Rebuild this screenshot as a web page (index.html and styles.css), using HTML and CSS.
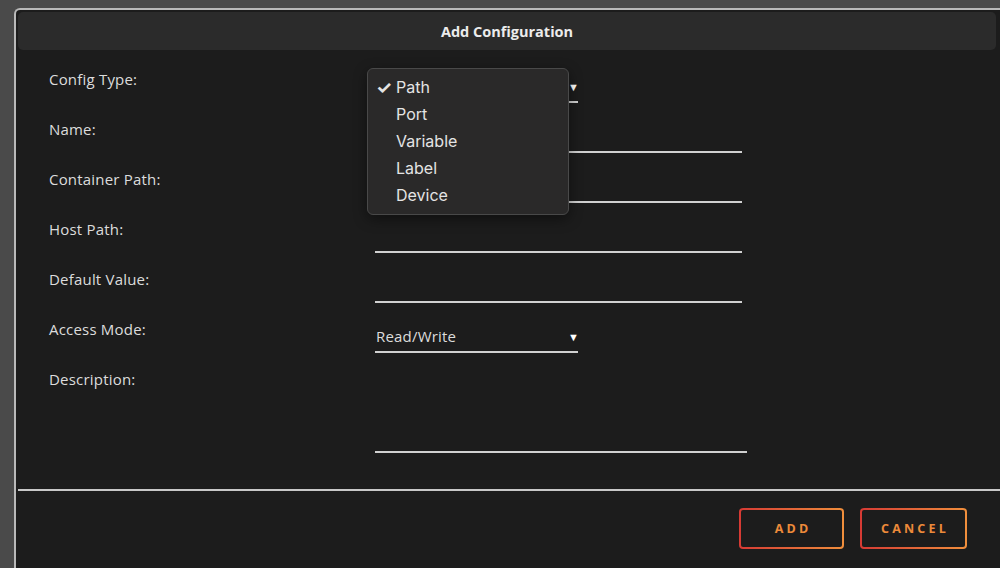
FILE: index.html
```html
<!DOCTYPE html>
<html lang="en">
<head>
    <meta charset="UTF-8">
    <meta name="viewport" content="width=device-width, initial-scale=1.0">
    <title>Add Configuration</title>
    <link rel="stylesheet" href="styles.css">
</head>
<body>
    <div class="dialog">
        <header class="dialog-header">
            <h1>Add Configuration</h1>
        </header>

        <form class="config-form">
            <div class="row">
                <label>Config Type:</label>
                <div class="field">
                    <div class="select">
                        <span></span>
                        <span class="arrow">&#9660;</span>
                    </div>
                    <ul class="menu">
                        <li class="checked">Path</li>
                        <li>Port</li>
                        <li>Variable</li>
                        <li>Label</li>
                        <li>Device</li>
                    </ul>
                </div>
            </div>
            <div class="row">
                <label for="name">Name:</label>
                <div class="field"><input type="text" id="name"></div>
            </div>
            <div class="row">
                <label for="container">Container Path:</label>
                <div class="field"><input type="text" id="container"></div>
            </div>
            <div class="row">
                <label for="host">Host Path:</label>
                <div class="field"><input type="text" id="host"></div>
            </div>
            <div class="row">
                <label for="default">Default Value:</label>
                <div class="field"><input type="text" id="default"></div>
            </div>
            <div class="row">
                <label>Access Mode:</label>
                <div class="field">
                    <div class="select">
                        <span>Read/Write</span>
                        <span class="arrow">&#9660;</span>
                    </div>
                </div>
            </div>
            <div class="row row-tall">
                <label for="desc">Description:</label>
                <div class="field"><textarea id="desc"></textarea></div>
            </div>
        </form>

        <footer class="dialog-footer">
            <button type="button" class="btn btn-add">ADD</button>
            <button type="button" class="btn btn-cancel">CANCEL</button>
        </footer>
    </div>
</body>
</html>
```

FILE: styles.css
```css
body {
    margin: 0;
    padding: 8px 0 0 14px;
    background-color: #4a4a4a;
    font-family: "Open Sans", "Noto Sans", sans-serif;
    overflow: hidden;
    height: 568px;
    box-sizing: border-box;
}

.dialog {
    width: 1000px;
    height: 580px;
    background-color: #1c1c1c;
    border-top: 2px solid #b9b9b9;
    border-left: 2px solid #b9b9b9;
    border-top-left-radius: 6px;
    padding: 2px 0 0 2px;
    box-sizing: border-box;
}

.dialog-header {
    height: 38px;
    margin-right: 18px;
    background-color: #2b2b2b;
    border-radius: 5px;
    display: flex;
    align-items: center;
    justify-content: center;
}

.dialog-header h1 {
    margin: 0;
    font-size: 14.5px;
    font-weight: 700;
    color: #ececec;
}

.config-form {
    padding: 19px 0 0 31px;
}

.row {
    display: grid;
    grid-template-columns: 326px 1fr;
    height: 50px;
}

.row-tall {
    height: 86px;
}

.row label {
    font-size: 15px;
    line-height: 20px;
    letter-spacing: 0.2px;
    color: #dcdcdc;
}

.field {
    position: relative;
}

.field input,
.field textarea {
    display: block;
    width: 367px;
    height: 34px;
    margin: 0;
    padding: 0;
    background: transparent;
    border: none;
    border-bottom: 2px solid #d0d0d0;
    box-sizing: border-box;
    color: #ddd;
    resize: none;
}

.field textarea {
    width: 372px;
    height: 84px;
}

.select {
    width: 203px;
    height: 34px;
    border-bottom: 2px solid #d0d0d0;
    box-sizing: border-box;
    display: flex;
    justify-content: space-between;
    align-items: center;
    padding: 2px 0 0 1px;
    font-size: 15px;
    letter-spacing: 0.2px;
    color: #dcdcdc;
}

.select .arrow {
    font-size: 11px;
    color: #fff;
    margin-right: -1px;
}

.menu {
    position: absolute;
    z-index: 2;
    top: -1px;
    left: -8px;
    width: 202px;
    margin: 0;
    padding: 5px 0;
    list-style: none;
    background-color: #2a2929;
    border: 1px solid #494949;
    border-radius: 6px;
    box-shadow: 0 4px 14px rgba(0, 0, 0, 0.45);
    box-sizing: border-box;
    font-family: Inter, "Noto Sans", sans-serif;
    font-size: 16px;
}

.menu li {
    height: 27px;
    line-height: 27px;
    padding-left: 28px;
    color: #e4e4e4;
    position: relative;
}

.menu li.checked::before {
    content: "\2713";
    position: absolute;
    left: 8px;
    font-size: 18px;
    font-weight: 700;
}

.dialog-footer {
    margin-top: 34px;
    border-top: 2px solid #c8c8c8;
    padding: 17px 0 0 721px;
    display: flex;
    gap: 16px;
}

.btn {
    height: 41px;
    padding: 0 0 0 3px;
    background:
        linear-gradient(#1c1c1c, #1c1c1c) padding-box,
        linear-gradient(90deg, #d63a34, #f08f3c) border-box;
    border: 2px solid transparent;
    border-radius: 4px;
    color: #ec8a3a;
    font-family: "Open Sans", sans-serif;
    font-size: 12.5px;
    font-weight: 700;
    letter-spacing: 3.2px;
    cursor: pointer;
}

.btn-add {
    width: 105px;
}

.btn-cancel {
    width: 107px;
}
```
